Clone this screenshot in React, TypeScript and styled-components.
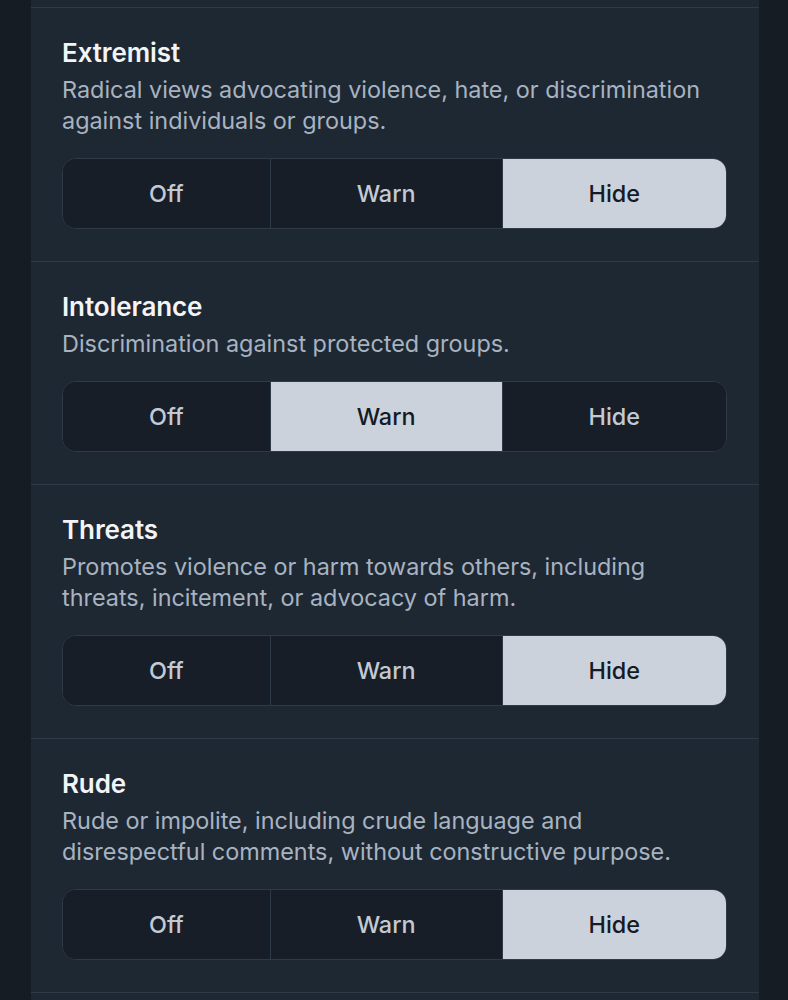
import React from "react";
import styled, { createGlobalStyle } from "styled-components";

const Global = createGlobalStyle`
  html, body { margin: 0; padding: 0; background: #161c24; }
  body { font-family: Inter, "Noto Sans", sans-serif; -webkit-font-smoothing: antialiased; }
  * { box-sizing: border-box; }
`;

const Page = styled.div`
  display: flex;
  justify-content: flex-start;
  padding-left: 31px;
  min-height: 1000px;
  background: #161c24;
`;

const Panel = styled.div`
  width: 728px;
  background: #1e2833;
  padding-top: 7px;
`;

const Section = styled.section`
  border-top: 1px solid #2e3a48;
  padding: 29px 32px 32px 31px;
  &:last-child { border-bottom: 1px solid #2e3a48; }
`;

const Title = styled.h3`
  margin: 0;
  font-size: 26px;
  line-height: 32px;
  font-weight: 600;
  letter-spacing: -0.1px;
  color: #f2f4f7;
`;

const Desc = styled.p`
  margin: 5px 0 0;
  font-size: 23.4px;
  line-height: 31px;
  font-weight: 400;
  color: #a8b3c1;
`;

const Group = styled.div`
  margin-top: 22px;
  display: flex;
  height: 71px;
  border: 1px solid #2e3a48;
  border-radius: 14px;
  overflow: hidden;
  background: #171e28;
`;

const Option = styled.button<{ $active: boolean }>`
  flex: 1 1 auto;
  border: 0;
  border-left: 1px solid #2e3a48;
  &:first-child { border-left: 0; }
  background: ${(p) => (p.$active ? "#cbd2dc" : "#171e28")};
  color: ${(p) => (p.$active ? "#151b24" : "#c3cad4")};
  font-family: Inter, "Noto Sans", sans-serif;
  font-size: 23.4px;
  font-weight: 500;
  padding: 0;
  cursor: pointer;
`;

type Level = "Off" | "Warn" | "Hide";

const items: { title: string; desc: string; value: Level }[] = [
  {
    title: "Extremist",
    desc: "Radical views advocating violence, hate, or discrimination against individuals or groups.",
    value: "Hide",
  },
  {
    title: "Intolerance",
    desc: "Discrimination against protected groups.",
    value: "Warn",
  },
  {
    title: "Threats",
    desc: "Promotes violence or harm towards others, including threats, incitement, or advocacy of harm.",
    value: "Hide",
  },
  {
    title: "Rude",
    desc: "Rude or impolite, including crude language and disrespectful comments, without constructive purpose.",
    value: "Hide",
  },
];

const levels: Level[] = ["Off", "Warn", "Hide"];

export default function App() {
  const [vals, setVals] = React.useState<Level[]>(items.map((i) => i.value));
  return (
    <>
      <Global />
      <Page>
        <Panel>
          {items.map((it, idx) => (
            <Section key={it.title}>
              <Title>{it.title}</Title>
              <Desc>{it.desc}</Desc>
              <Group>
                {levels.map((l) => (
                  <Option
                    key={l}
                    $active={vals[idx] === l}
                    onClick={() => setVals((v) => v.map((x, i) => (i === idx ? l : x)))}
                  >
                    {l}
                  </Option>
                ))}
              </Group>
            </Section>
          ))}
        </Panel>
      </Page>
    </>
  );
}
